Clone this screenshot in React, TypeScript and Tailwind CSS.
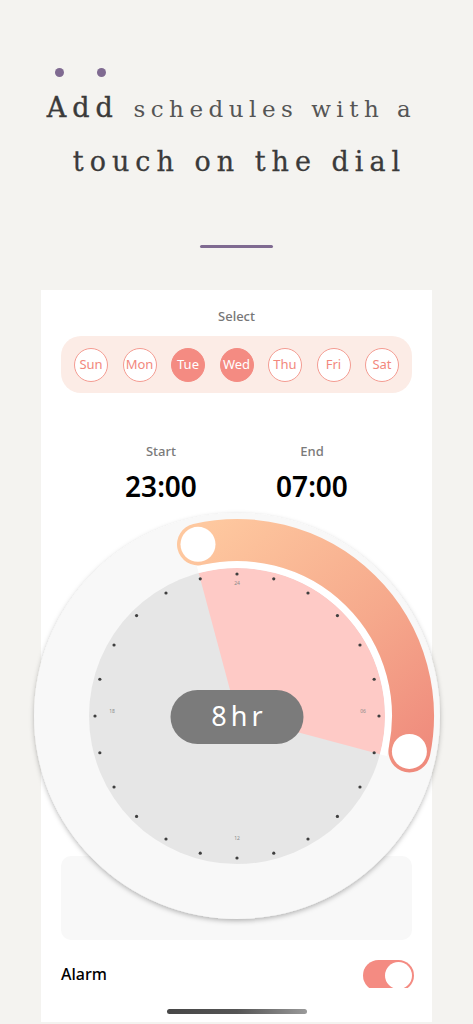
import React from 'react';

const days = [
  { label: 'Sun', on: false },
  { label: 'Mon', on: false },
  { label: 'Tue', on: true },
  { label: 'Wed', on: true },
  { label: 'Thu', on: false },
  { label: 'Fri', on: false },
  { label: 'Sat', on: false },
];

const C = 210;

const polar = (r: number, deg: number) => {
  const a = (deg * Math.PI) / 180;
  return { x: C + r * Math.sin(a), y: C - r * Math.cos(a) };
};

const Dial: React.FC = () => {
  const w1 = polar(148, -15);
  const w2 = polar(148, 105);
  const a1 = polar(176, -12.8);
  const a2 = polar(176, 101.6);
  const t1 = polar(151.5, -15);
  const t2 = polar(151.5, 105);
  const ticks = Array.from({ length: 24 }, (_, i) => polar(142, i * 15));

  return (
    <svg width="420" height="420" viewBox="0 0 420 420" className="block">
      <defs>
        <filter id="dialShadow" x="-10%" y="-10%" width="120%" height="120%">
          <feDropShadow dx="0" dy="2" stdDeviation="2.5" floodColor="#000" floodOpacity="0.28" />
        </filter>
        <linearGradient id="arcGrad" gradientUnits="userSpaceOnUse" x1="180" y1="20" x2="390" y2="260">
          <stop offset="0" stopColor="#fec89f" />
          <stop offset="0.55" stopColor="#f6a98c" />
          <stop offset="1" stopColor="#ef8a7c" />
        </linearGradient>
      </defs>

      <circle cx={C} cy={C} r="203" fill="#f8f8f8" filter="url(#dialShadow)" />
      <circle cx={C} cy={C} r="148" fill="#e6e6e6" />
      <path
        d={`M${C} ${C} L${w1.x} ${w1.y} A148 148 0 0 1 ${w2.x} ${w2.y} Z`}
        fill="#fecac6"
      />
      <path
        d={`M${t1.x} ${t1.y} A151.5 151.5 0 0 1 ${t2.x} ${t2.y}`}
        fill="none"
        stroke="#ffffff"
        strokeWidth="7"
      />
      <path
        d={`M${a1.x} ${a1.y} A176 176 0 0 1 ${a2.x} ${a2.y}`}
        fill="none"
        stroke="url(#arcGrad)"
        strokeWidth="42"
        strokeLinecap="round"
      />
      <circle cx={a1.x} cy={a1.y} r="17.5" fill="#ffffff" />
      <circle cx={a2.x} cy={a2.y} r="17.5" fill="#ffffff" />

      {ticks.map((p, i) => (
        <circle key={i} cx={p.x} cy={p.y} r="1.6" fill="#3f3f3f" />
      ))}

      <g fill="#8a8a8a" fontSize="5" fontFamily="Noto Sans, sans-serif" textAnchor="middle">
        <text x={C} y={C - 131}>24</text>
        <text x={C + 126} y={C - 3}>06</text>
        <text x={C - 125} y={C - 3}>18</text>
        <text x={C} y={C + 124}>12</text>
      </g>

      <rect x={C - 66.5} y={C - 26} width="133" height="54" rx="27" fill="#7b7b7b" />
      <text
        x={C + 2}
        y={C + 10}
        textAnchor="middle"
        fill="#ffffff"
        fontSize="27"
        letterSpacing="4"
        fontFamily="Noto Sans, sans-serif"
      >
        8hr
      </text>
    </svg>
  );
};

export default function App() {
  return (
    <div className="min-h-screen bg-[#f4f3f0] overflow-hidden font-['Noto_Sans',sans-serif]">
      <div className="flex gap-[33px] pl-[55px] pt-[68px]">
        <span className="w-[9px] h-[9px] rounded-full bg-[#7f6a91]" />
        <span className="w-[9px] h-[9px] rounded-full bg-[#7f6a91]" />
      </div>

      <div className="mt-[4px] text-center font-['DejaVu_Serif',serif] text-[27px] tracking-[6px] text-[#3a3a3a]">
        <div className="h-[54px] leading-[54px] pr-[10px] whitespace-nowrap">
          <span className="[-webkit-text-stroke:0.4px_#3a3a3a]">Add</span>{' '}
          <span className="text-[23px] leading-[0] tracking-[5.5px] text-[#555555]">schedules with a</span>
        </div>
        <div className="h-[54px] leading-[54px] pl-[6px] [-webkit-text-stroke:0.3px_#3a3a3a]">
          touch on the dial
        </div>
      </div>

      <div className="mx-auto mt-[56px] w-[73px] h-[3px] rounded-full bg-[#7f6a91]" />

      <div className="ml-[41px] mt-[42px] w-[391px] bg-white pb-[8px]">
        <div className="pt-[16px] text-center text-[13px] leading-[20px] font-medium text-[#777777]">
          Select
        </div>

        <div className="mx-[20px] mt-[10px] h-[57px] rounded-[20px] bg-[#fcece6] px-[13px] flex items-center justify-between">
          {days.map((d) => (
            <div
              key={d.label}
              className={
                d.on
                  ? 'w-[34px] h-[34px] rounded-full bg-[#f48b82] border-[1.5px] border-[#f48b82] flex items-center justify-center text-[13px] text-white'
                  : 'w-[34px] h-[34px] rounded-full bg-white border-[1.5px] border-[#f49c92] flex items-center justify-center text-[13px] text-[#f2887d]'
              }
            >
              {d.label}
            </div>
          ))}
        </div>

        <div className="mt-[48px] flex justify-center gap-[11px]">
          <div className="w-[140px] text-center">
            <div className="text-[13px] leading-[20px] font-medium text-[#7a7a7a]">Start</div>
            <div className="mt-[7px] text-[28px] leading-[36px] font-semibold text-black">23:00</div>
          </div>
          <div className="w-[140px] text-center">
            <div className="text-[13px] leading-[20px] font-medium text-[#7a7a7a]">End</div>
            <div className="mt-[7px] text-[28px] leading-[36px] font-semibold text-black">07:00</div>
          </div>
        </div>

        <div className="relative z-10 mt-[2px] flex justify-center -mx-[15px]">
          <Dial />
        </div>

        <div className="mx-[20px] -mt-[70px] h-[84px] rounded-[10px] bg-[#f8f8f8]" />

        <div className="mx-[20px] mt-[20px] h-[28px] flex items-start justify-between">
          <span className="mt-[4px] text-[16px] leading-[20px] font-medium text-black">Alarm</span>
          <div className="h-[28px] w-[51px] overflow-hidden -mr-[2px]">
            <div className="h-[31px] w-[51px] rounded-full bg-[#f48b82] p-[2px] flex justify-end">
              <div className="h-[27px] w-[27px] rounded-full bg-white" />
            </div>
          </div>
        </div>

        <div className="mx-auto mt-[21px] h-[5px] w-[140px] rounded-full bg-gradient-to-r from-[#474747] via-[#555555] to-[#9a9a9a]" />
      </div>
    </div>
  );
}
